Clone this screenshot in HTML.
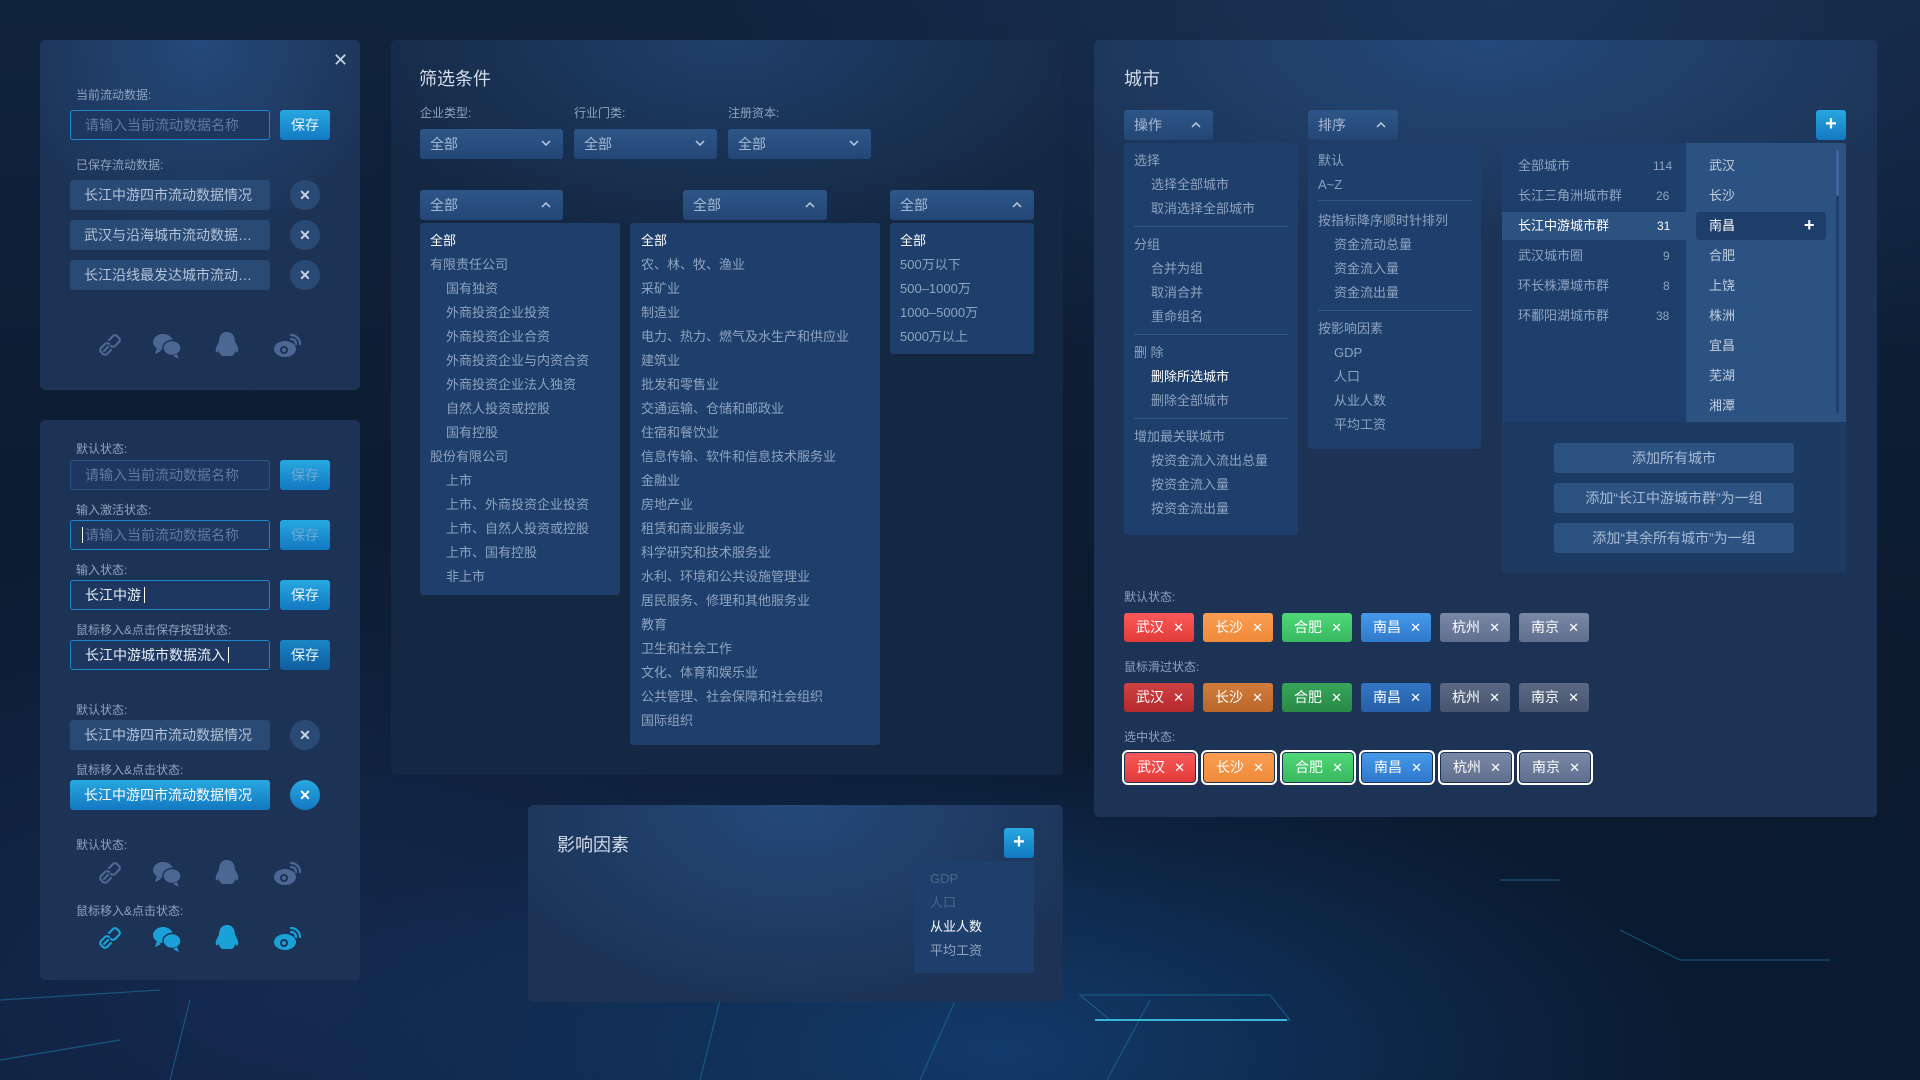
<!DOCTYPE html>
<html><head><meta charset="utf-8">
<style>
*{box-sizing:border-box;margin:0;padding:0}
html,body{width:1920px;height:1080px;overflow:hidden}
body{position:relative;font-family:"Liberation Sans","Noto Sans CJK SC",sans-serif;color:#8ea3c0;
background:radial-gradient(ellipse 700px 300px at 1000px 1050px,#123a6a 0%,rgba(18,58,106,0) 100%),radial-gradient(ellipse 900px 500px at 300px 1000px,#142a50 0%,rgba(20,42,80,0) 100%),radial-gradient(ellipse 800px 400px at 1500px 0px,#1a3358 0%,rgba(26,51,88,0) 100%),linear-gradient(180deg,#10233d 0%,#0b1a2f 60%,#0a1a30 100%)}
.a{position:absolute}
.panel{position:absolute;background:radial-gradient(ellipse 60% 200px at 50% 0,#24497a 0%,rgba(36,73,122,0) 100%),#1c3356;border-radius:5px}
.lbl{position:absolute;font-size:12px;color:#8ea3c0;line-height:14px}
.inp{position:absolute;width:200px;height:30px;border:1px solid #1e86c8;border-radius:3px;background:#1d3760;font-size:14px;line-height:28px;padding-left:14px;color:#5f7aa0}
.inp.w{color:#e8eef6}
.btn{position:absolute;width:50px;height:30px;border-radius:3px;background:linear-gradient(#27a8e0,#1378c2);color:#e6f2fb;font-size:14px;text-align:center;line-height:30px}
.item{position:absolute;width:200px;height:30px;border-radius:3px;background:#2a4a76;font-size:14px;line-height:30px;padding-left:14px;color:#b4c3d8}
.circ{position:absolute;width:30px;height:30px;border-radius:50%;background:#2a4a76;color:#c8d4e4;text-align:center;line-height:30px;font-size:14px;font-weight:bold}
.hd{position:absolute;height:30px;border-radius:3px;background:linear-gradient(#2d5688,#234676);font-size:14px;line-height:30px;padding-left:10px;color:#a8bad3}
.hd svg{position:absolute;right:12px;top:11px}
.lst{position:absolute;background:#1e3f6b;border-radius:3px}
.li{position:absolute;font-size:13px;line-height:16px;color:#8ea3c0;white-space:nowrap}
.sep{position:absolute;height:1px;background:#2f5584}
.tag{position:absolute;width:70px;height:29px;border-radius:3px;color:#fff;font-size:14px;line-height:29px;padding-left:12px}
.tag span{position:absolute;right:10px;top:0;font-size:13px}
.sel{outline:2px solid #fff;outline-offset:1px}
.plus{position:absolute;width:30px;height:30px;border-radius:3px;background:linear-gradient(#27a8e0,#1378c2);color:#fff;font-size:20px;font-weight:bold;text-align:center;line-height:29px}
.cb{position:absolute;width:240px;height:30px;border-radius:3px;background:#2c5282;color:#a8bad3;font-size:14px;text-align:center;line-height:30px}
</style></head><body>
<svg class="a" style="left:0;top:0" width="1920" height="1080">
<g stroke="#1c6a9a" stroke-width="1.2" fill="none" opacity=".7">
<path d="M1107 1080 L1150 1000 M1080 995 L1270 995 L1290 1020 L1110 1020 Z M920 1080 L960 990 M700 1080 L720 1000"/>
<path d="M1620 930 L1680 960 L1830 960 M1500 880 L1560 880"/>
<path d="M0 1000 L160 990 M0 1060 L120 1040 M170 1080 L190 1000"/>
</g>
<path d="M1095 1020 L1287 1020" stroke="#3bb6d8" stroke-width="2"/>
</svg>

<!-- Panel 1 -->
<div class="panel" style="left:40px;top:40px;width:320px;height:350px"></div>
<div class="a" style="left:333px;top:52px;color:#c9d4e3;font-size:18px;line-height:16px">✕</div>
<div class="lbl" style="left:76px;top:88px">当前流动数据:</div>
<div class="inp" style="left:70px;top:110px">请输入当前流动数据名称</div>
<div class="btn" style="left:280px;top:110px">保存</div>
<div class="lbl" style="left:76px;top:158px">已保存流动数据:</div>
<div class="item" style="left:70px;top:180px">长江中游四市流动数据情况</div>
<div class="item" style="left:70px;top:220px">武汉与沿海城市流动数据…</div>
<div class="item" style="left:70px;top:260px">长江沿线最发达城市流动…</div>
<div class="circ" style="left:290px;top:180px">✕</div>
<div class="circ" style="left:290px;top:220px">✕</div>
<div class="circ" style="left:290px;top:260px">✕</div>

<!-- Panel 2 -->
<div class="panel" style="left:40px;top:420px;width:320px;height:560px;background:#1c3356"></div>
<div class="lbl" style="left:76px;top:442px">默认状态:</div>
<div class="inp" style="left:70px;top:460px;border-color:#2c5687">请输入当前流动数据名称</div>
<div class="btn" style="left:280px;top:460px;color:#6da7d4">保存</div>
<div class="lbl" style="left:76px;top:503px">输入激活状态:</div>
<div class="inp" style="left:70px;top:520px"><span style="border-left:1px solid #fff;padding-left:2px;margin-left:-3px">请输入当前流动数据名称</span></div>
<div class="btn" style="left:280px;top:520px;color:#6da7d4">保存</div>
<div class="lbl" style="left:76px;top:563px">输入状态:</div>
<div class="inp w" style="left:70px;top:580px">长江中游<span style="border-right:1px solid #fff;margin-left:3px"></span></div>
<div class="btn" style="left:280px;top:580px">保存</div>
<div class="lbl" style="left:76px;top:623px">鼠标移入&amp;点击保存按钮状态:</div>
<div class="inp w" style="left:70px;top:640px">长江中游城市数据流入<span style="border-right:1px solid #fff;margin-left:3px"></span></div>
<div class="btn" style="left:280px;top:640px;background:linear-gradient(#1a86c6,#0f5e9e)">保存</div>
<div class="lbl" style="left:76px;top:703px">默认状态:</div>
<div class="item" style="left:70px;top:720px">长江中游四市流动数据情况</div>
<div class="circ" style="left:290px;top:720px">✕</div>
<div class="lbl" style="left:76px;top:763px">鼠标移入&amp;点击状态:</div>
<div class="item" style="left:70px;top:780px;background:linear-gradient(#27a8e0,#1378c2);color:#fff">长江中游四市流动数据情况</div>
<div class="circ" style="left:290px;top:780px;background:linear-gradient(#27a8e0,#1378c2);color:#fff">✕</div>
<div class="lbl" style="left:76px;top:838px">默认状态:</div>
<div class="lbl" style="left:76px;top:904px">鼠标移入&amp;点击状态:</div>

<svg class="a" style="left:0;top:0" width="400" height="1000">
<defs>
<g id="ic">
<path d="M-6 6 L-2 2 M-9 3 l4-4 a3 3 0 0 1 4 0 M9-3 l-4 4 a3 3 0 0 1-4 0 M-9 3 a3 3 0 0 0 0 4 l2 2 a3 3 0 0 0 4 0 l4-4 M9-3 a3 3 0 0 0 0-4 l-2-2 a3 3 0 0 0-4 0 l-4 4" fill="none" stroke-width="2.2" stroke-linecap="round"/>
<g transform="translate(57,0)" stroke="none"><ellipse cx="-4" cy="-3" rx="10" ry="8"/><path d="M-10 3 l-2 6 l6-3z"/><ellipse cx="5" cy="3" rx="9" ry="7.5" stroke="#1c3356" stroke-width="1.5"/><path d="M10 9 l2 5 l-6-3z"/></g>
<g transform="translate(117,0)" stroke="none"><path d="M0-13 c-6 0-8 5-8 10 c-2 3-4 7-3 10 c1 1 2 0 3-1 c0 3 2 4 3 5 h10 c1-1 3-2 3-5 c1 1 2 2 3 1 c1-3-1-7-3-10 c0-5-2-10-8-10z"/></g>
<g transform="translate(177,0)"><ellipse cx="-2" cy="4" rx="11" ry="8" stroke="none"/><circle cx="-3" cy="5" r="4" fill="#1c3356" stroke="none"/><circle cx="-3" cy="5" r="2" stroke="none"/><path d="M4-10 a9 9 0 0 1 9 9 M4-6 a5 5 0 0 1 5 5" fill="none" stroke-width="2.2" stroke-linecap="round"/></g>
</g>
</defs>
<use href="#ic" x="110" y="345" fill="#4b6894" stroke="#4b6894"/>
<use href="#ic" x="110" y="873" fill="#4b6894" stroke="#4b6894"/>
<use href="#ic" x="110" y="938" fill="#1aa2d8" stroke="#1aa2d8"/>
</svg>

<!-- Filter panel -->
<div class="panel" style="left:391px;top:40px;width:672px;height:735px;background:radial-gradient(ellipse 60% 200px at 50% 0,#1f3f6a 0%,rgba(31,63,106,0) 100%),#142843"></div>
<div class="a" style="left:419px;top:65px;font-size:18px;color:#d3dcea">筛选条件</div>
<div class="lbl" style="left:420px;top:106px">企业类型:</div>
<div class="lbl" style="left:574px;top:106px">行业门类:</div>
<div class="lbl" style="left:728px;top:106px">注册资本:</div>
<div class="hd" style="left:420px;top:129px;width:143px">全部<svg width="10" height="7"><path d="M1 1 L5 5 L9 1" stroke="#c0cde0" stroke-width="1.5" fill="none"/></svg></div>
<div class="hd" style="left:574px;top:129px;width:143px">全部<svg width="10" height="7"><path d="M1 1 L5 5 L9 1" stroke="#c0cde0" stroke-width="1.5" fill="none"/></svg></div>
<div class="hd" style="left:728px;top:129px;width:143px">全部<svg width="10" height="7"><path d="M1 1 L5 5 L9 1" stroke="#c0cde0" stroke-width="1.5" fill="none"/></svg></div>
<div class="hd" style="left:420px;top:190px;width:143px">全部<svg width="10" height="7"><path d="M1 6 L5 2 L9 6" stroke="#c0cde0" stroke-width="1.5" fill="none"/></svg></div>
<div class="hd" style="left:683px;top:190px;width:144px">全部<svg width="10" height="7"><path d="M1 6 L5 2 L9 6" stroke="#c0cde0" stroke-width="1.5" fill="none"/></svg></div>
<div class="hd" style="left:890px;top:190px;width:144px">全部<svg width="10" height="7"><path d="M1 6 L5 2 L9 6" stroke="#c0cde0" stroke-width="1.5" fill="none"/></svg></div>
<div class="lst" style="left:420px;top:223px;width:200px;height:372px"></div>
<div class="lst" style="left:630px;top:223px;width:250px;height:522px"></div>
<div class="lst" style="left:890px;top:223px;width:144px;height:131px"></div>
<div class="li" style="left:430px;top:233px;color:#fff">全部</div>
<div class="li" style="left:430px;top:257px">有限责任公司</div>
<div class="li" style="left:446px;top:281px">国有独资</div>
<div class="li" style="left:446px;top:305px">外商投资企业投资</div>
<div class="li" style="left:446px;top:329px">外商投资企业合资</div>
<div class="li" style="left:446px;top:353px">外商投资企业与内资合资</div>
<div class="li" style="left:446px;top:377px">外商投资企业法人独资</div>
<div class="li" style="left:446px;top:401px">自然人投资或控股</div>
<div class="li" style="left:446px;top:425px">国有控股</div>
<div class="li" style="left:430px;top:449px">股份有限公司</div>
<div class="li" style="left:446px;top:473px">上市</div>
<div class="li" style="left:446px;top:497px">上市、外商投资企业投资</div>
<div class="li" style="left:446px;top:521px">上市、自然人投资或控股</div>
<div class="li" style="left:446px;top:545px">上市、国有控股</div>
<div class="li" style="left:446px;top:569px">非上市</div>

<div class="li" style="left:641px;top:233px;color:#fff">全部</div>
<div class="li" style="left:641px;top:257px">农、林、牧、渔业</div>
<div class="li" style="left:641px;top:281px">采矿业</div>
<div class="li" style="left:641px;top:305px">制造业</div>
<div class="li" style="left:641px;top:329px">电力、热力、燃气及水生产和供应业</div>
<div class="li" style="left:641px;top:353px">建筑业</div>
<div class="li" style="left:641px;top:377px">批发和零售业</div>
<div class="li" style="left:641px;top:401px">交通运输、仓储和邮政业</div>
<div class="li" style="left:641px;top:425px">住宿和餐饮业</div>
<div class="li" style="left:641px;top:449px">信息传输、软件和信息技术服务业</div>
<div class="li" style="left:641px;top:473px">金融业</div>
<div class="li" style="left:641px;top:497px">房地产业</div>
<div class="li" style="left:641px;top:521px">租赁和商业服务业</div>
<div class="li" style="left:641px;top:545px">科学研究和技术服务业</div>
<div class="li" style="left:641px;top:569px">水利、环境和公共设施管理业</div>
<div class="li" style="left:641px;top:593px">居民服务、修理和其他服务业</div>
<div class="li" style="left:641px;top:617px">教育</div>
<div class="li" style="left:641px;top:641px">卫生和社会工作</div>
<div class="li" style="left:641px;top:665px">文化、体育和娱乐业</div>
<div class="li" style="left:641px;top:689px">公共管理、社会保障和社会组织</div>
<div class="li" style="left:641px;top:713px">国际组织</div>

<div class="li" style="left:900px;top:233px;color:#fff">全部</div>
<div class="li" style="left:900px;top:257px">500万以下</div>
<div class="li" style="left:900px;top:281px">500–1000万</div>
<div class="li" style="left:900px;top:305px">1000–5000万</div>
<div class="li" style="left:900px;top:329px">5000万以上</div>

<!-- Influence panel -->
<div class="panel" style="left:528px;top:805px;width:535px;height:197px"></div>
<div class="a" style="left:557px;top:831px;font-size:18px;color:#d3dcea">影响因素</div>
<div class="plus" style="left:1004px;top:828px">+</div>
<div class="lst" style="left:914px;top:861px;width:120px;height:112px"></div>
<div class="li" style="left:930px;top:871px;color:#4d6688">GDP</div>
<div class="li" style="left:930px;top:895px;color:#4d6688">人口</div>
<div class="li" style="left:930px;top:919px;color:#fff">从业人数</div>
<div class="li" style="left:930px;top:943px">平均工资</div>

<!-- City panel -->
<div class="panel" style="left:1094px;top:40px;width:783px;height:777px"></div>
<div class="a" style="left:1124px;top:65px;font-size:18px;color:#d3dcea">城市</div>
<div class="hd" style="left:1124px;top:110px;width:89px">操作<svg width="10" height="7"><path d="M1 6 L5 2 L9 6" stroke="#c0cde0" stroke-width="1.5" fill="none"/></svg></div>
<div class="hd" style="left:1308px;top:110px;width:90px">排序<svg width="10" height="7"><path d="M1 6 L5 2 L9 6" stroke="#c0cde0" stroke-width="1.5" fill="none"/></svg></div>
<div class="plus" style="left:1816px;top:110px">+</div>
<div class="lst" style="left:1124px;top:143px;width:174px;height:392px"></div>
<div class="lst" style="left:1308px;top:143px;width:173px;height:306px"></div>
<div class="li" style="left:1134px;top:153px">选择</div>
<div class="li" style="left:1151px;top:177px">选择全部城市</div>
<div class="li" style="left:1151px;top:201px">取消选择全部城市</div>
<div class="sep" style="left:1134px;top:226px;width:154px"></div>
<div class="li" style="left:1134px;top:237px">分组</div>
<div class="li" style="left:1151px;top:261px">合并为组</div>
<div class="li" style="left:1151px;top:285px">取消合并</div>
<div class="li" style="left:1151px;top:309px">重命组名</div>
<div class="sep" style="left:1134px;top:334px;width:154px"></div>
<div class="li" style="left:1134px;top:345px">删 除</div>
<div class="li" style="left:1151px;top:369px;color:#fff">删除所选城市</div>
<div class="li" style="left:1151px;top:393px">删除全部城市</div>
<div class="sep" style="left:1134px;top:418px;width:154px"></div>
<div class="li" style="left:1134px;top:429px">增加最关联城市</div>
<div class="li" style="left:1151px;top:453px">按资金流入流出总量</div>
<div class="li" style="left:1151px;top:477px">按资金流入量</div>
<div class="li" style="left:1151px;top:501px">按资金流出量</div>

<div class="li" style="left:1318px;top:153px">默认</div>
<div class="li" style="left:1318px;top:177px">A~Z</div>
<div class="sep" style="left:1318px;top:200px;width:154px"></div>
<div class="li" style="left:1318px;top:213px">按指标降序顺时针排列</div>
<div class="li" style="left:1334px;top:237px">资金流动总量</div>
<div class="li" style="left:1334px;top:261px">资金流入量</div>
<div class="li" style="left:1334px;top:285px">资金流出量</div>
<div class="sep" style="left:1318px;top:310px;width:154px"></div>
<div class="li" style="left:1318px;top:321px">按影响因素</div>
<div class="li" style="left:1334px;top:345px">GDP</div>
<div class="li" style="left:1334px;top:369px">人口</div>
<div class="li" style="left:1334px;top:393px">从业人数</div>
<div class="li" style="left:1334px;top:417px">平均工资</div>

<div class="lst" style="left:1502px;top:143px;width:344px;height:430px;background:#1d3a63"></div>
<div class="a" style="left:1502px;top:143px;width:184px;height:279px;background:#1e3f6b;border-radius:3px 0 0 0"></div>
<div class="a" style="left:1686px;top:143px;width:160px;height:279px;background:#2c5282;border-radius:0 3px 0 0"></div>
<div class="a" style="left:1502px;top:212px;width:184px;height:28px;background:#2c5282"></div>
<div class="a" style="left:1696px;top:212px;width:130px;height:28px;background:#1e3f6b;border-radius:3px"></div>
<div class="a" style="left:1836px;top:150px;width:3px;height:263px;background:#1e3f6b;border-radius:2px"></div>
<div class="a" style="left:1836px;top:150px;width:3px;height:46px;background:#3d6599;border-radius:2px"></div>
<div class="li" style="left:1518px;top:158px">全部城市</div><div class="li" style="left:1653px;top:158px;font-size:12px">114</div>
<div class="li" style="left:1518px;top:188px">长江三角洲城市群</div><div class="li" style="left:1656px;top:188px;font-size:12px">26</div>
<div class="li" style="left:1518px;top:218px;color:#fff">长江中游城市群</div><div class="li" style="left:1657px;top:218px;font-size:12px;color:#fff">31</div>
<div class="li" style="left:1518px;top:248px">武汉城市圈</div><div class="li" style="left:1663px;top:248px;font-size:12px">9</div>
<div class="li" style="left:1518px;top:278px">环长株潭城市群</div><div class="li" style="left:1663px;top:278px;font-size:12px">8</div>
<div class="li" style="left:1518px;top:308px">环鄱阳湖城市群</div><div class="li" style="left:1656px;top:308px;font-size:12px">38</div>
<div class="li" style="left:1709px;top:158px;color:#c3cfe0">武汉</div>
<div class="li" style="left:1709px;top:188px;color:#c3cfe0">长沙</div>
<div class="li" style="left:1709px;top:218px;color:#fff">南昌</div>
<div class="a" style="left:1804px;top:214px;color:#fff;font-size:18px;font-weight:bold;line-height:22px">+</div>
<div class="li" style="left:1709px;top:248px;color:#c3cfe0">合肥</div>
<div class="li" style="left:1709px;top:278px;color:#c3cfe0">上饶</div>
<div class="li" style="left:1709px;top:308px;color:#c3cfe0">株洲</div>
<div class="li" style="left:1709px;top:338px;color:#c3cfe0">宜昌</div>
<div class="li" style="left:1709px;top:368px;color:#c3cfe0">芜湖</div>
<div class="li" style="left:1709px;top:398px;color:#c3cfe0">湘潭</div>
<div class="cb" style="left:1554px;top:443px">添加所有城市</div>
<div class="cb" style="left:1554px;top:483px">添加“长江中游城市群”为一组</div>
<div class="cb" style="left:1554px;top:523px">添加“其余所有城市”为一组</div>

<div class="lbl" style="left:1124px;top:590px">默认状态:</div>
<div class="lbl" style="left:1124px;top:660px">鼠标滑过状态:</div>
<div class="lbl" style="left:1124px;top:730px">选中状态:</div>

<div class="tag" style="left:1124px;top:613px;background:linear-gradient(#fa5a5a,#e23a3a)">武汉<span>✕</span></div>
<div class="tag" style="left:1203px;top:613px;background:linear-gradient(#fb9d52,#ef8a3a)">长沙<span>✕</span></div>
<div class="tag" style="left:1282px;top:613px;background:linear-gradient(#4fd878,#39b860)">合肥<span>✕</span></div>
<div class="tag" style="left:1361px;top:613px;background:linear-gradient(#459ae8,#2f78cc)">南昌<span>✕</span></div>
<div class="tag" style="left:1440px;top:613px;background:linear-gradient(#7a88a6,#606f8e)">杭州<span>✕</span></div>
<div class="tag" style="left:1519px;top:613px;background:linear-gradient(#7a88a6,#606f8e)">南京<span>✕</span></div>

<div class="tag" style="left:1124px;top:683px;background:linear-gradient(#cf4143,#b52a2d)">武汉<span>✕</span></div>
<div class="tag" style="left:1203px;top:683px;background:linear-gradient(#d17c3c,#bb672a)">长沙<span>✕</span></div>
<div class="tag" style="left:1282px;top:683px;background:linear-gradient(#36a659,#2a8a48)">合肥<span>✕</span></div>
<div class="tag" style="left:1361px;top:683px;background:linear-gradient(#3176c4,#275fa8)">南昌<span>✕</span></div>
<div class="tag" style="left:1440px;top:683px;background:linear-gradient(#5a6884,#48556f)">杭州<span>✕</span></div>
<div class="tag" style="left:1519px;top:683px;background:linear-gradient(#5a6884,#48556f)">南京<span>✕</span></div>

<div class="tag sel" style="left:1125px;top:753px;background:linear-gradient(#fa5a5a,#e23a3a)">武汉<span>✕</span></div>
<div class="tag sel" style="left:1204px;top:753px;background:linear-gradient(#fb9d52,#ef8a3a)">长沙<span>✕</span></div>
<div class="tag sel" style="left:1283px;top:753px;background:linear-gradient(#4fd878,#39b860)">合肥<span>✕</span></div>
<div class="tag sel" style="left:1362px;top:753px;background:linear-gradient(#459ae8,#2f78cc)">南昌<span>✕</span></div>
<div class="tag sel" style="left:1441px;top:753px;background:linear-gradient(#7a88a6,#606f8e)">杭州<span>✕</span></div>
<div class="tag sel" style="left:1520px;top:753px;background:linear-gradient(#7a88a6,#606f8e)">南京<span>✕</span></div>
</body></html>
